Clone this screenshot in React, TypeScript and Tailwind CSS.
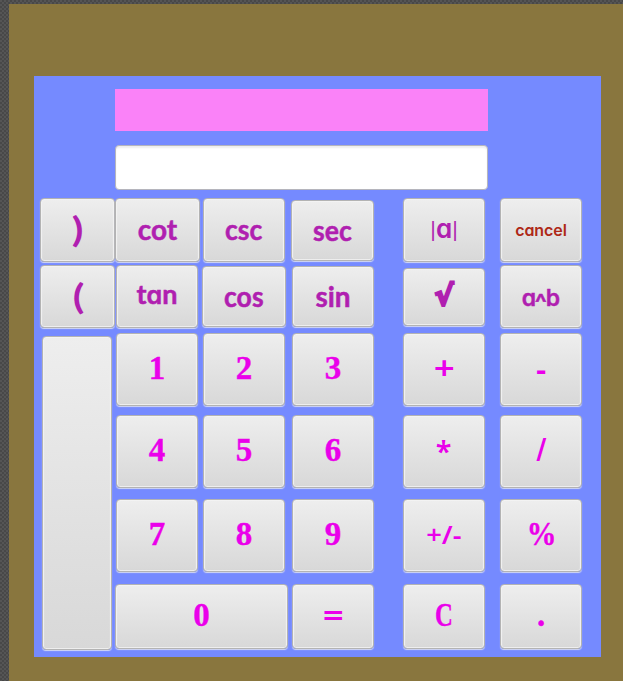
import type { ReactNode } from "react";
import clsx from "clsx";

const digit = "font-['Liberation_Serif',serif] font-bold text-[33px] text-[#ea00ea] -translate-y-[1.5px] [-webkit-text-stroke:0.4px_#ea00ea]";
const op = "font-['Noto_Sans',sans-serif] font-semibold text-[32px] text-[#ea00ea]";
const fn = "font-[Lato,sans-serif] font-bold text-[28px] text-[#b01fb0] -translate-y-px [-webkit-text-stroke:0.5px_#b01fb0]";
const paren = "font-[Lato,sans-serif] font-bold text-[34px] text-[#b01fb0] scale-x-125 -translate-y-px";

function Key({ box, text, children }: { box: string; text?: string; children?: ReactNode }) {
  return (
    <button
      className={clsx(
        "flex shrink-0 items-center justify-center rounded-[4px] border border-[#b3b3b3] bg-linear-to-b from-[#eeeeee] to-[#d8d8d8] shadow-[0_1px_1px_#d3d8f2,inset_0_0_1px_1px_#f3f3f3,inset_0_-1px_1px_#bbbbbb]",
        box,
      )}
    >
      <span className={clsx("block whitespace-nowrap leading-none", text)}>{children}</span>
    </button>
  );
}

/* Single-storey "a" */
function A() {
  return <span className="font-[Inter] text-[0.93em] font-semibold [font-feature-settings:'cv11']">a</span>;
}

export default function App() {
  return (
    <div className="h-[681px] w-[623px] overflow-hidden bg-[#4b4b4b] bg-[repeating-conic-gradient(#484848_0_25%,#555555_0_50%)] bg-size-[4px_4px] pt-[4px] pl-[9px]">
      <div className="h-[677px] bg-[#89763e] pt-[72px] pl-[25px]">
        <main className="flex h-[581px] w-[567px] flex-col bg-[#758aff] pt-[13px] pl-[6px]">
          <div className="ml-[75px] h-[42px] w-[373px] shrink-0 bg-[#fa82f8]" />
          <div className="mt-[14px] ml-[75px] h-[45px] w-[373px] shrink-0 rounded-[4px] border border-[#b5b5bd] bg-white shadow-[inset_0_2px_2px_#eeeeee]" />
          <div className="mt-[8px] flex items-start">
            <div className="flex w-[75px] flex-col">
              <Key box="h-[64px] w-[75px]" text={paren}>)</Key>
              <Key box="mt-[3px] h-[63px] w-[75px]" text={clsx(paren, "translate-x-[1px]")}>(</Key>
              <Key box="mt-[8px] ml-[2px] h-[314px] w-[70px]" />
            </div>
            <div className="flex w-[176px] flex-col">
              <div className="flex items-start">
                <div className="flex w-[87px] flex-col">
                  <Key box="h-[64px] w-[85px]" text={fn}>cot</Key>
                  <Key box="mt-[3px] ml-px h-[63px] w-[82px]" text="font-[Lato,sans-serif] font-bold text-[27px] text-[#b01fb0] -translate-y-[2px] [-webkit-text-stroke:0.5px_#b01fb0]">t<A />n</Key>
                  <Key box="mt-[5px] ml-px h-[73px] w-[82px]" text={digit}>1</Key>
                  <Key box="mt-[9px] ml-px h-[73px] w-[82px]" text={digit}>4</Key>
                  <Key box="mt-[11px] ml-px h-[73px] w-[82px]" text={digit}>7</Key>
                </div>
                <div className="flex flex-col">
                  <Key box="ml-px h-[64px] w-[82px]" text={clsx(fn, "scale-x-95")}>csc</Key>
                  <Key box="mt-[4px] h-[61px] w-[84px]" text={clsx(fn, "scale-x-95")}>cos</Key>
                  <Key box="mt-[6px] ml-px h-[73px] w-[82px]" text={digit}>2</Key>
                  <Key box="mt-[9px] ml-px h-[73px] w-[82px]" text={digit}>5</Key>
                  <Key box="mt-[11px] ml-px h-[73px] w-[82px]" text={digit}>8</Key>
                </div>
              </div>
              <Key box="mt-[12px] h-[65px] w-[173px]" text={digit}>0</Key>
            </div>
            <div className="flex w-[112px] flex-col">
              <Key box="mt-[2px] h-[61px] w-[83px]" text={clsx(fn, "scale-x-95")}>sec</Key>
              <Key box="mt-[5px] ml-px h-[61px] w-[82px]" text={fn}>sin</Key>
              <Key box="mt-[6px] ml-px h-[73px] w-[82px]" text={digit}>3</Key>
              <Key box="mt-[9px] ml-px h-[73px] w-[82px]" text={digit}>6</Key>
              <Key box="mt-[11px] ml-px h-[73px] w-[82px]" text={digit}>9</Key>
              <Key box="mt-[12px] ml-px h-[65px] w-[82px]" text={clsx(op, "scale-x-115 -translate-y-[2px]")}>=</Key>
            </div>
            <div className="flex w-[97px] flex-col">
              <Key box="h-[64px] w-[82px]" text="flex items-center font-[Lato,sans-serif] text-[28px] text-[#b01fb0] -translate-y-px">
                <span className="text-[22px] font-medium">|</span>
                <A />
                <span className="text-[22px] font-medium">|</span>
              </Key>
              <Key box="mt-[6px] h-[58px] w-[82px]" text="font-['DejaVu_Sans',sans-serif] font-bold text-[28px] text-[#b01fb0] -translate-y-[1px] [-webkit-text-stroke:2.5px_#b01fb0]">√</Key>
              <Key box="mt-[7px] h-[73px] w-[82px]" text={clsx(op, "scale-x-115 -translate-y-[2px]")}>+</Key>
              <Key box="mt-[9px] h-[73px] w-[82px]" text={clsx(op, "-translate-y-[1px] scale-90")}>*</Key>
              <Key box="mt-[11px] h-[73px] w-[82px]" text="font-['Noto_Sans',sans-serif] font-semibold text-[26px] text-[#ea00ea] -translate-y-[2px] scale-x-105">+/-</Key>
              <Key box="mt-[12px] h-[65px] w-[82px]" text={clsx(digit, "scale-x-75")}>C</Key>
            </div>
            <div className="flex flex-col">
              <Key box="h-[64px] w-[82px]" text="font-[Inter] font-semibold text-[16px] tracking-[-0.1px] text-[#ae2817] [font-feature-settings:'cv11']">cancel</Key>
              <Key box="mt-[3px] h-[63px] w-[82px]" text="font-[Inter] font-semibold text-[23px] translate-y-[2px] text-[#b01fb0] [-webkit-text-stroke:0.4px_#b01fb0] [font-feature-settings:'cv11']">
                a<span className="inline-block translate-y-[4px] scale-125 text-[20px]">^</span>b
              </Key>
              <Key box="mt-[5px] h-[73px] w-[82px]" text={clsx(op, "-translate-y-px")}>-</Key>
              <Key box="mt-[9px] h-[73px] w-[82px]" text="font-['Noto_Sans',sans-serif] font-semibold text-[32px] text-[#ea00ea] -translate-y-[3px] scale-x-80">/</Key>
              <Key box="mt-[11px] h-[73px] w-[82px]" text={clsx(digit, "scale-x-90")}>%</Key>
              <Key box="mt-[12px] h-[65px] w-[82px]" text={digit}>.</Key>
            </div>
          </div>
        </main>
      </div>
    </div>
  );
}
